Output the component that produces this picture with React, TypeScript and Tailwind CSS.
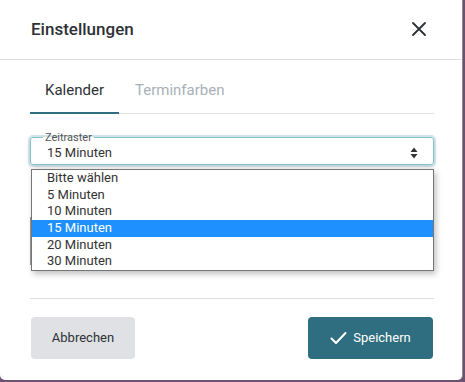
import React from 'react';

const options = ['Bitte wählen', '5 Minuten', '10 Minuten', '15 Minuten', '20 Minuten', '30 Minuten'];

const CloseIcon: React.FC = () => (
  <svg width="16" height="16" viewBox="0 0 16 16" fill="none" stroke="#2b2f33" strokeWidth="1.8" strokeLinecap="round">
    <path d="M2 2 L14 14 M14 2 L2 14" />
  </svg>
);

const CheckIcon: React.FC = () => (
  <svg width="17" height="14" viewBox="0 0 17 14" fill="none" stroke="#ffffff" strokeWidth="2" strokeLinecap="round" strokeLinejoin="round">
    <path d="M1.5 7.5 L6 12 L15.5 2" />
  </svg>
);

const SortIcon: React.FC = () => (
  <svg width="8" height="12" viewBox="0 0 8 12" fill="#333">
    <path d="M4 0.5 L7.5 5 H0.5 Z" />
    <path d="M4 11.5 L7.5 7 H0.5 Z" />
  </svg>
);

export default function App() {
  return (
    <div className="w-[465px] h-[382px] bg-[#6a5270] overflow-hidden" style={{ fontFamily: 'Roboto, "Liberation Sans", sans-serif' }}>
      <div className="w-[463px] h-[380px] bg-white rounded-b-[5px] border-r border-[#8a8a8a] flex flex-col text-[#333]">
        {/* header */}
        <div className="h-[60px] flex items-center justify-between pl-[31px] pr-[35px] border-b border-[#dedede]">
          <h2 className="text-[17px] font-medium text-[#2d3136] leading-none -mt-[1px]">Einstellungen</h2>
          <button className="-mt-[1px]"><CloseIcon /></button>
        </div>

        <div className="pl-[30px] pr-[28px] flex flex-col">
          {/* tabs */}
          <div className="flex mt-[21px] border-b border-[#e3e3e3]">
            <div className="w-[89px] text-center text-[15px] leading-[18px] pb-[13px] border-b-[2px] border-[#2e6e80] -mb-[1px] text-[#2d3136]">Kalender</div>
            <div className="ml-[16px] text-[15px] leading-[18px] text-[#aab0b6]">Terminfarben</div>
          </div>

          {/* select */}
          <div className="relative mt-[18px]">
            <fieldset className="h-[33px] border border-[#87c1cc] rounded-[3px] shadow-[0_0_0_2px_rgba(130,180,195,0.35),0_3px_6px_rgba(0,0,0,0.12)] pl-[13px] pr-[15px] flex items-start">
              <legend className="text-[11px] leading-[11px] text-[#555] px-[2px] -ml-[1px]">Zeitraster</legend>
              <span className="text-[13px] leading-[16px] text-[#333] ml-[3px] mt-[2px]">15 Minuten</span>
              <span className="ml-auto mt-[4px]"><SortIcon /></span>
            </fieldset>

            {/* open listbox */}
            <div className="absolute left-[1px] right-0 top-[37px] z-10 bg-white border border-[#767676] shadow-[2px_3px_6px_rgba(0,0,0,0.25)]">
              {options.map(o => (
                <div
                  key={o}
                  className={`h-[16.67px] pl-[15px] text-[13px] leading-[16.67px] ${o === '15 Minuten' ? 'bg-[#1e90ff] text-white' : 'text-[#333]'}`}
                >
                  {o}
                </div>
              ))}
            </div>
          </div>

          {/* field behind the list */}
          <div className="h-[48px] mt-[52px] border-l border-[#999] w-[2px]" />

          {/* divider */}
          <div className="mt-[33px] border-t border-[#dedde3]" />

          {/* footer */}
          <div className="flex justify-between mt-[18px]">
            <button className="w-[104px] h-[42px] rounded-[4px] bg-[#dfe1e5] text-[13px] text-[#2d3136] ml-[1px]">Abbrechen</button>
            <button className="w-[125px] h-[42px] rounded-[4px] bg-[#2e6e80] text-[13px] text-white flex items-center justify-center gap-[6px] mr-[1px]">
              <CheckIcon />
              Speichern
            </button>
          </div>
        </div>
      </div>
    </div>
  );
}
